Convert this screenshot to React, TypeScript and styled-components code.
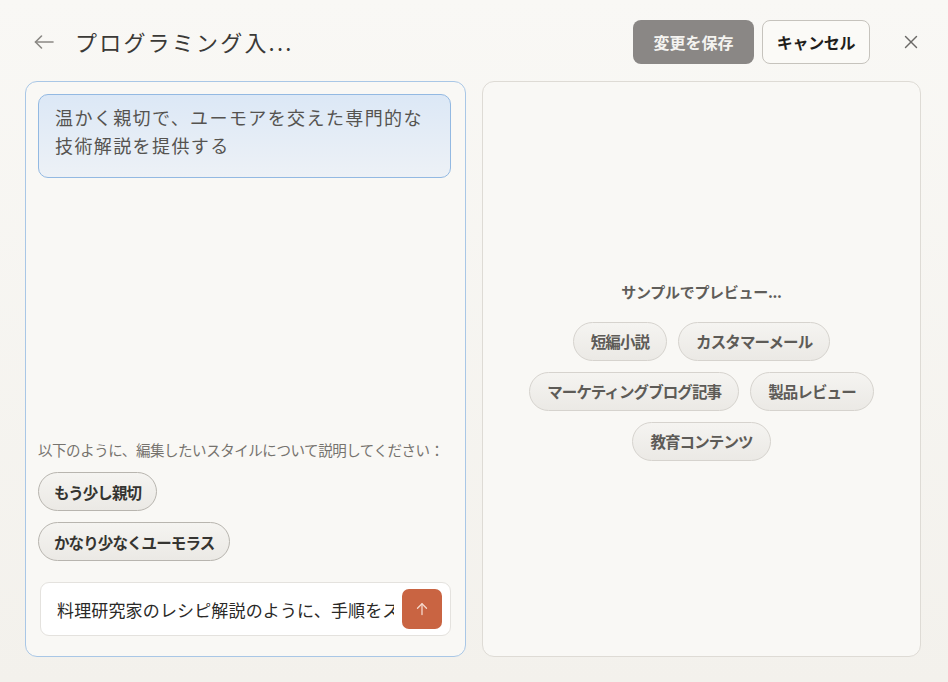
import React from 'react';
import styled, { createGlobalStyle } from 'styled-components';

const GlobalStyle = createGlobalStyle`
    html, body {
        margin: 0;
        padding: 0;
        height: 100%;
    }
    body {
        font-family: "Noto Sans CJK JP", "Noto Sans", sans-serif;
        background: linear-gradient(180deg, #f9f8f5 0%, #f3f1ec 100%);
    }
    #root {
        height: 100%;
    }
`;

const leftChips = ['もう少し親切', 'かなり少なくユーモラス'];

const sampleRows = [
    ['短編小説', 'カスタマーメール'],
    ['マーケティングブログ記事', '製品レビュー'],
    ['教育コンテンツ']
];

const App: React.FC = () => {
    return (
        <StyledPage>
            <GlobalStyle />
            <StyledHeader>
                <StyledTitleGroup>
                    <StyledIconButton aria-label="戻る">
                        <svg width="22" height="22" viewBox="0 0 22 22" fill="none" stroke="#8a8884" strokeWidth="1.6" strokeLinecap="round" strokeLinejoin="round">
                            <path d="M20 11H2.5" />
                            <path d="M8.5 5L2.5 11L8.5 17" />
                        </svg>
                    </StyledIconButton>
                    <StyledTitle>プログラミング入...</StyledTitle>
                </StyledTitleGroup>
                <StyledActions>
                    <StyledSaveButton>変更を保存</StyledSaveButton>
                    <StyledCancelButton>キャンセル</StyledCancelButton>
                    <StyledCloseButton aria-label="閉じる">
                        <svg width="14" height="14" viewBox="0 0 14 14" fill="none" stroke="#6b6966" strokeWidth="1.4" strokeLinecap="round">
                            <path d="M1.5 1.5L12.5 12.5" />
                            <path d="M12.5 1.5L1.5 12.5" />
                        </svg>
                    </StyledCloseButton>
                </StyledActions>
            </StyledHeader>
            <StyledPanels>
                <StyledEditorPanel>
                    <StyledBubble>
                        温かく親切で、ユーモアを交えた専門的な技術解説を提供する
                    </StyledBubble>
                    <StyledSpacer />
                    <StyledHint>以下のように、編集したいスタイルについて説明してください：</StyledHint>
                    <StyledChipList>
                        {leftChips.map(chip => (
                            <StyledChip key={chip} variant="dark">{chip}</StyledChip>
                        ))}
                    </StyledChipList>
                    <StyledInputBox>
                        <StyledInputText>料理研究家のレシピ解説のように、手順をステップごとに丁寧に</StyledInputText>
                        <StyledSendButton aria-label="送信">
                            <svg width="14" height="14" viewBox="0 0 14 14" fill="none" stroke="#f6d9cc" strokeWidth="1.3" strokeLinecap="round" strokeLinejoin="round">
                                <path d="M7 12.5V1.8" />
                                <path d="M2.5 6.3L7 1.8L11.5 6.3" />
                            </svg>
                        </StyledSendButton>
                    </StyledInputBox>
                </StyledEditorPanel>
                <StyledPreviewPanel>
                    <StyledPreviewLabel>サンプルでプレビュー...</StyledPreviewLabel>
                    <StyledSampleRows>
                        {sampleRows.map((row, i) => (
                            <StyledSampleRow key={i}>
                                {row.map(chip => (
                                    <StyledChip key={chip} variant="light">{chip}</StyledChip>
                                ))}
                            </StyledSampleRow>
                        ))}
                    </StyledSampleRows>
                </StyledPreviewPanel>
            </StyledPanels>
        </StyledPage>
    );
};

const StyledPage = styled.div`
    box-sizing: border-box;
    height: 682px;
    padding: 20px 27px 25px 25px;
    display: flex;
    flex-direction: column;
    gap: 17px;
`;

const StyledHeader = styled.header`
    display: flex;
    align-items: center;
    justify-content: space-between;
    height: 44px;
`;

const StyledTitleGroup = styled.div`
    display: flex;
    align-items: center;
    gap: 20px;
    padding-left: 8px;
`;

const StyledIconButton = styled.button`
    border: none;
    background: none;
    padding: 0;
    display: flex;
    align-items: center;
    cursor: pointer;
`;

const StyledTitle = styled.h1`
    margin: 0 0 3px 0;
    font-size: 22px;
    font-weight: 400;
    color: #3b3a37;
    letter-spacing: 2.2px;
`;

const StyledActions = styled.div`
    display: flex;
    align-items: center;
    gap: 8px;
`;

const StyledButtonBase = styled.button`
    height: 44px;
    box-sizing: border-box;
    border-radius: 8px;
    font-family: "Noto Sans CJK JP", sans-serif;
    font-size: 16px;
    font-weight: 700;
    cursor: pointer;
`;

const StyledSaveButton = styled(StyledButtonBase)`
    width: 121px;
    border: none;
    background: #8a8785;
    color: #f4f3f0;
`;

const StyledCancelButton = styled(StyledButtonBase)`
    width: 108px;
    border: 1px solid #c6c3bd;
    background: #fbfaf7;
    color: #1f1e1c;
    letter-spacing: -0.3px;
`;

const StyledCloseButton = styled.button`
    border: none;
    background: none;
    padding: 0;
    margin-left: 26px;
    margin-right: 3px;
    display: flex;
    align-items: center;
    cursor: pointer;
`;

const StyledPanels = styled.div`
    flex: 1;
    display: grid;
    grid-template-columns: 441px 1fr;
    gap: 16px;
    min-height: 0;
`;

const StyledPanel = styled.section`
    box-sizing: border-box;
    border-radius: 12px;
    background: #f9f8f5;
`;

const StyledEditorPanel = styled(StyledPanel)`
    border: 1px solid #a9c7e6;
    padding: 12px 14px 20px 12px;
    display: flex;
    flex-direction: column;
`;

const StyledBubble = styled.div`
    border: 1px solid #93b9e2;
    border-radius: 10px;
    background: linear-gradient(180deg, #dce8f6 0%, #edf1f6 100%);
    padding: 8px 16px 18px 16px;
    font-size: 18px;
    line-height: 28px;
    letter-spacing: 1.4px;
    color: #555350;
`;

const StyledSpacer = styled.div`
    flex: 1;
`;

const StyledHint = styled.p`
    margin: 0 0 12px 0;
    font-size: 14.5px;
    letter-spacing: -0.45px;
    color: #76736e;
    white-space: nowrap;
`;

const StyledChipList = styled.div`
    display: flex;
    flex-direction: column;
    align-items: flex-start;
    gap: 11px;
`;

const StyledChip = styled.button<{ variant: 'dark' | 'light' }>`
    height: 39px;
    box-sizing: border-box;
    padding: 0 ${props => (props.variant === 'dark' ? 15 : 17)}px;
    border-radius: 20px;
    border: 1px solid ${props => (props.variant === 'dark' ? '#b8b5af' : '#d6d3ce')};
    background: linear-gradient(180deg, #f5f4f1 0%, #ebe9e5 100%);
    font-family: "Noto Sans CJK JP", sans-serif;
    font-size: 15.5px;
    font-weight: 700;
    letter-spacing: -0.9px;
    color: ${props => (props.variant === 'dark' ? '#353431' : '#5d5b57')};
    white-space: nowrap;
    cursor: pointer;
`;

const StyledInputBox = styled.div`
    margin: 21px 0 0 2px;
    height: 54px;
    box-sizing: border-box;
    border: 1px solid #e4e2de;
    border-radius: 9px;
    background: #ffffff;
    display: flex;
    align-items: center;
    gap: 8px;
    padding: 0 8px 0 16px;
`;

const StyledInputText = styled.div`
    flex: 1;
    overflow: hidden;
    white-space: nowrap;
    font-size: 17px;
    letter-spacing: 0.15px;
    color: #2a2927;
`;

const StyledSendButton = styled.button`
    width: 40px;
    height: 40px;
    flex: none;
    border: none;
    border-radius: 7px;
    background: #c96442;
    display: flex;
    align-items: center;
    justify-content: center;
    padding: 0;
    cursor: pointer;
`;

const StyledPreviewPanel = styled(StyledPanel)`
    border: 1px solid #dedbd5;
    display: flex;
    flex-direction: column;
    align-items: center;
    justify-content: center;
    gap: 20px;
    padding-top: 3px;
`;

const StyledPreviewLabel = styled.div`
    font-size: 15px;
    font-weight: 700;
    letter-spacing: -0.3px;
    color: #5f5d59;
`;

const StyledSampleRows = styled.div`
    display: flex;
    flex-direction: column;
    gap: 11px;
`;

const StyledSampleRow = styled.div`
    display: flex;
    justify-content: center;
    gap: 11px;
`;

export default App;
